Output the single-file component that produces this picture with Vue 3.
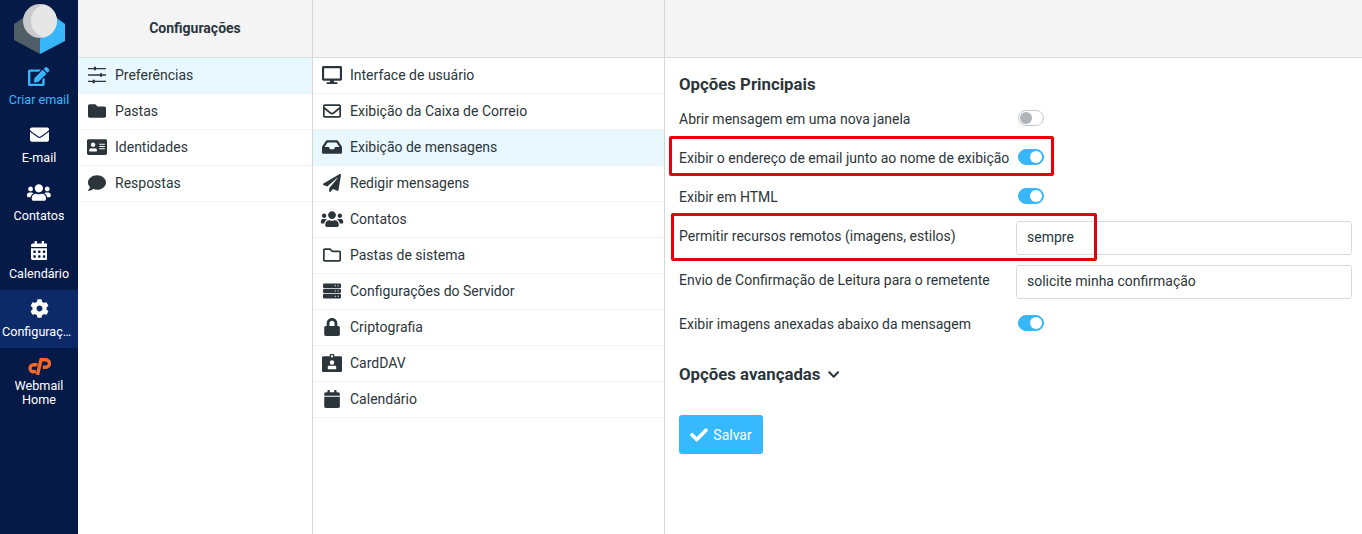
<template>
  <div class="app">
    <nav class="sidebar">
      <svg class="logo" viewBox="0 0 78 58" width="78" height="58">
        <defs>
          <clipPath id="ball"><circle cx="40" cy="21" r="17" /></clipPath>
        </defs>
        <polygon points="14,24 26,16 40,39 40,54 14,40" fill="#4f5e66" />
        <polygon points="40,39 54,16 65,24 65,41 40,54" fill="#37b6fa" />
        <circle cx="40" cy="21" r="17" fill="#c9cbcd" />
        <circle cx="48" cy="21" r="17" fill="#e6e6e6" clip-path="url(#ball)" />
      </svg>
      <a v-for="item in navItems" :key="item.label" class="nav-item" :class="{ compose: item.compose, active: item.active }">
        <svg class="nav-icon" :viewBox="item.box"><path :d="item.d" fill="currentColor" /></svg>
        <span class="nav-label">{{ item.label }}</span>
      </a>
      <a class="nav-item home">
        <svg class="cp-logo" viewBox="0 0 24 17" width="24" height="17">
          <path d="M10.5 6.8H6.5a3.3 3.3 0 0 0 0 6.9H9" fill="none" stroke="#f0692a" stroke-width="3.4" />
          <path d="M10.5 17 14 1.8h4.8a3.7 3.7 0 0 1 0 7.4h-3" fill="none" stroke="#f0692a" stroke-width="3.4" />
        </svg>
        <span class="nav-label">Webmail<br />Home</span>
      </a>
    </nav>

    <section class="col col-sections">
      <header class="col-head"><span>Configurações</span></header>
      <ul class="list">
        <li v-for="row in sections" :key="row.label" :class="{ selected: row.selected }">
          <svg class="row-icon" :viewBox="row.box" height="18"><path :d="row.d" fill="currentColor" fill-rule="evenodd" /></svg>
          {{ row.label }}
        </li>
      </ul>
    </section>

    <section class="col col-subsections">
      <header class="col-head"></header>
      <ul class="list">
        <li v-for="row in subsections" :key="row.label" :class="{ selected: row.selected }">
          <svg class="row-icon" :viewBox="row.box" height="18"><path :d="row.d" fill="currentColor" fill-rule="evenodd" /></svg>
          {{ row.label }}
        </li>
      </ul>
    </section>

    <section class="col col-content">
      <header class="col-head"></header>
      <div class="content">
        <h2 class="title-main">Opções Principais</h2>
        <div v-for="opt in options" :key="opt.label" class="opt" :class="opt.value ? 'opt-select' : 'opt-toggle'">
          <span class="opt-label">{{ opt.label }}</span>
          <div v-if="opt.value" class="select">{{ opt.value }}</div>
          <span v-else class="toggle" :class="{ on: opt.on }"></span>
        </div>
        <h2 class="title-adv">
          Opções avançadas
          <svg viewBox="0 0 448 512" height="13"><path :d="icons.chevron" fill="currentColor" /></svg>
        </h2>
        <button class="save" type="button">
          <svg viewBox="0 0 512 512" height="18"><path :d="icons.check" fill="currentColor" /></svg>
          Salvar
        </button>
        <div class="mark mark-one"></div>
        <div class="mark mark-two"></div>
      </div>
    </section>
  </div>
</template>

<script setup>
const icons = {
  edit: 'M402.6 83.2l90.2 90.2c3.8 3.8 3.8 10 0 13.8L274.4 405.6l-92.8 10.3c-12.4 1.4-22.9-9.1-21.5-21.5l10.3-92.8L388.8 83.2c3.8-3.8 10-3.8 13.8 0zm162-22.9l-48.8-48.8c-15.2-15.2-39.9-15.2-55.2 0l-35.4 35.4c-3.8 3.8-3.8 10 0 13.8l90.2 90.2c3.8 3.8 10 3.8 13.8 0l35.4-35.4c15.2-15.3 15.2-40 0-55.2zM384 346.2V448H64V128h229.8c3.2 0 6.2-1.3 8.5-3.5l40-40c7.6-7.6 2.2-20.5-8.5-20.5H48C21.5 64 0 85.5 0 112v352c0 26.5 21.5 48 48 48h352c26.5 0 48-21.5 48-48V306.2c0-10.7-12.9-16-20.5-8.5l-40 40c-2.2 2.3-3.5 5.3-3.5 8.5z',
  envelope: 'M502.3 190.8c3.9-3.1 9.7-.2 9.7 4.7V400c0 26.5-21.5 48-48 48H48c-26.5 0-48-21.5-48-48V195.6c0-5 5.7-7.8 9.7-4.7 22.4 17.4 52.1 39.5 154.1 113.6 21.1 15.4 56.7 47.8 92.2 47.6 35.7.3 72-32.8 92.3-47.6 102-74.1 131.6-96.3 154-113.7zM256 320c23.2.4 56.6-29.2 73.4-41.4 132.7-96.3 142.8-104.7 173.4-128.7 5.8-4.5 9.2-11.5 9.2-18.9v-19c0-26.5-21.5-48-48-48H48C21.5 64 0 85.5 0 112v19c0 7.4 3.4 14.3 9.2 18.9 30.6 23.9 40.7 32.4 173.4 128.7 16.8 12.2 50.2 41.8 73.4 41.4z',
  users: 'M96 224c35.3 0 64-28.7 64-64s-28.7-64-64-64-64 28.7-64 64 28.7 64 64 64zm448 0c35.3 0 64-28.7 64-64s-28.7-64-64-64-64 28.7-64 64 28.7 64 64 64zm32 32h-64c-17.6 0-33.5 7.1-45.1 18.6 40.3 22.1 68.9 62 75.1 109.4h66c17.7 0 32-14.3 32-32v-32c0-35.3-28.7-64-64-64zm-256 0c61.9 0 112-50.1 112-112S381.9 32 320 32 208 82.1 208 144s50.1 112 112 112zm76.8 32h-8.3c-20.8 10-43.9 16-68.5 16s-47.6-6-68.5-16h-8.3C179.6 288 128 339.6 128 403.2V432c0 26.5 21.5 48 48 48h288c26.5 0 48-21.5 48-48v-28.8c0-63.6-51.6-115.2-115.2-115.2zm-223.7-13.4C161.5 263.1 145.6 256 128 256H64c-35.3 0-64 28.7-64 64v32c0 17.7 14.3 32 32 32h65.9c6.3-47.4 34.9-87.3 75.2-109.4z',
  calendarAlt: 'M0 464c0 26.5 21.5 48 48 48h352c26.5 0 48-21.5 48-48V192H0v272zm320-196c0-6.6 5.4-12 12-12h40c6.6 0 12 5.4 12 12v40c0 6.6-5.4 12-12 12h-40c-6.6 0-12-5.4-12-12v-40zm0 128c0-6.6 5.4-12 12-12h40c6.6 0 12 5.4 12 12v40c0 6.6-5.4 12-12 12h-40c-6.6 0-12-5.4-12-12v-40zM192 268c0-6.6 5.4-12 12-12h40c6.6 0 12 5.4 12 12v40c0 6.6-5.4 12-12 12h-40c-6.6 0-12-5.4-12-12v-40zm0 128c0-6.6 5.4-12 12-12h40c6.6 0 12 5.4 12 12v40c0 6.6-5.4 12-12 12h-40c-6.6 0-12-5.4-12-12v-40zM64 268c0-6.6 5.4-12 12-12h40c6.6 0 12 5.4 12 12v40c0 6.6-5.4 12-12 12H76c-6.6 0-12-5.4-12-12v-40zm0 128c0-6.6 5.4-12 12-12h40c6.6 0 12 5.4 12 12v40c0 6.6-5.4 12-12 12H76c-6.6 0-12-5.4-12-12v-40zM400 64h-48V16c0-8.8-7.2-16-16-16h-32c-8.8 0-16 7.2-16 16v48H160V16c0-8.8-7.2-16-16-16h-32c-8.8 0-16 7.2-16 16v48H48C21.5 64 0 85.5 0 112v48h448v-48c0-26.5-21.5-48-48-48z',
  cog: 'M487.4 315.7l-42.6-24.6c4.3-23.2 4.3-47 0-70.2l42.6-24.6c4.9-2.8 7.1-8.6 5.5-14-11.1-35.6-30-67.8-54.7-94.6-3.8-4.1-10-5.1-14.8-2.3L380.8 110c-17.9-15.4-38.5-27.3-60.8-35.1V25.8c0-5.6-3.9-10.5-9.4-11.7-36.7-8.2-74.3-7.8-109.2 0-5.5 1.2-9.4 6.1-9.4 11.7V75c-22.2 7.9-42.8 19.8-60.8 35.1L88.7 85.5c-4.9-2.8-11-1.9-14.8 2.3-24.7 26.7-43.6 58.9-54.7 94.6-1.7 5.4.6 11.2 5.5 14L67.3 221c-4.3 23.2-4.3 47 0 70.2l-42.6 24.6c-4.9 2.8-7.1 8.6-5.5 14 11.1 35.6 30 67.8 54.7 94.6 3.8 4.1 10 5.1 14.8 2.3l42.6-24.6c17.9 15.4 38.5 27.3 60.8 35.1v49.2c0 5.6 3.9 10.5 9.4 11.7 36.7 8.2 74.3 7.8 109.2 0 5.5-1.2 9.4-6.1 9.4-11.7v-49.2c22.2-7.9 42.8-19.8 60.8-35.1l42.6 24.6c4.9 2.8 11 1.9 14.8-2.3 24.7-26.7 43.6-58.9 54.7-94.6 1.5-5.5-.7-11.3-5.6-14.1zM256 336c-44.1 0-80-35.9-80-80s35.9-80 80-80 80 35.9 80 80-35.9 80-80 80z',
  sliders: 'M0 54h168v36h-168zM168 20h60v104h-60zM228 54h284v36h-284zM0 238h340v36h-340zM340 204h60v104h-60zM400 238h112v36h-112zM0 422h132v36h-132zM132 388h60v104h-60zM192 422h320v36h-320z',
  folder: 'M464 128H272l-64-64H48C21.49 64 0 85.49 0 112v288c0 26.51 21.49 48 48 48h416c26.51 0 48-21.49 48-48V176c0-26.51-21.49-48-48-48z',
  idCard: 'M528 32H48C21.5 32 0 53.5 0 80v352c0 26.5 21.5 48 48 48h480c26.5 0 48-21.5 48-48V80c0-26.5-21.5-48-48-48zm-352 96c35.3 0 64 28.7 64 64s-28.7 64-64 64-64-28.7-64-64 28.7-64 64-64zm112 236.8c0 10.6-10 19.2-22.4 19.2H86.4C74 384 64 375.4 64 364.8v-19.2c0-31.8 30.1-57.6 67.2-57.6h5c12.3 5.1 25.7 8 39.8 8s27.6-2.9 39.8-8h5c37.1 0 67.2 25.8 67.2 57.6v19.2zM512 312c0 4.4-3.6 8-8 8H360c-4.4 0-8-3.6-8-8v-16c0-4.4 3.6-8 8-8h144c4.4 0 8 3.6 8 8v16zm0-64c0 4.4-3.6 8-8 8H360c-4.4 0-8-3.6-8-8v-16c0-4.4 3.6-8 8-8h144c4.4 0 8 3.6 8 8v16zm0-64c0 4.4-3.6 8-8 8H360c-4.4 0-8-3.6-8-8v-16c0-4.4 3.6-8 8-8h144c4.4 0 8 3.6 8 8v16z',
  comment: 'M256 32C114.6 32 0 125.1 0 240c0 49.6 21.4 95 57 130.7C44.5 421.1 2.7 466 2.2 466.5c-2.2 2.3-2.8 5.7-1.5 8.7S4.8 480 8 480c66.3 0 116-31.8 140.6-51.4 32.7 12.3 69 19.4 107.4 19.4 141.4 0 256-93.1 256-208S397.4 32 256 32z',
  desktop: 'M528 0H48C21.5 0 0 21.5 0 48v320c0 26.5 21.5 48 48 48h192l-16 48h-72c-13.3 0-24 10.7-24 24s10.7 24 24 24h272c13.3 0 24-10.7 24-24s-10.7-24-24-24h-72l-16-48h192c26.5 0 48-21.5 48-48V48c0-26.5-21.5-48-48-48zm-16 352H64V64h448v288z',
  envelopeOpen: 'M464 64H48C21.49 64 0 85.49 0 112v288c0 26.51 21.49 48 48 48h416c26.51 0 48-21.49 48-48V112c0-26.51-21.49-48-48-48zm0 48v40.805c-22.422 18.259-58.168 46.651-134.587 106.49-16.841 13.247-50.201 45.072-73.413 44.701-23.208.375-56.579-31.459-73.413-44.701C106.18 199.465 70.425 171.067 48 152.805V112h416zM48 400V214.398c22.914 18.251 55.409 43.862 104.938 82.646 21.857 17.205 60.134 55.186 103.062 54.955 42.717.231 80.509-37.199 103.053-54.947 49.528-38.783 82.032-64.401 104.947-82.653V400H48z',
  inbox: 'M567.938 243.908L462.25 85.374A48.003 48.003 0 0 0 422.311 64H153.689a48 48 0 0 0-39.938 21.374L8.062 243.908A47.994 47.994 0 0 0 0 270.533V400c0 26.51 21.49 48 48 48h480c26.51 0 48-21.49 48-48V270.533a47.994 47.994 0 0 0-8.062-26.625zM162.252 128h251.497l85.333 128H376l-32 64H232l-32-64H76.918l85.334-128z',
  plane: 'M476 3.2L12.5 270.6c-18.1 10.4-15.8 35.6 2.2 43.2L121 358.4l287.3-253.2c5.5-4.9 13.3 2.6 8.6 8.3L176 407v80.5c0 23.6 28.5 32.9 42.5 15.8L282 426l124.6 52.2c14.2 6 30.4-2.9 33-18.2l72-432C515 7.8 493.3-6.8 476 3.2z',
  folderOpen: 'M464 128H272l-54.63-54.63c-6-6-14.14-9.37-22.63-9.37H48C21.49 64 0 85.49 0 112v288c0 26.51 21.49 48 48 48h416c26.51 0 48-21.49 48-48V176c0-26.51-21.49-48-48-48zm0 272H48V112h140.12l54.63 54.63c6 6 14.14 9.37 22.63 9.37H464v224z',
  server: 'M32 40h448a32 32 0 0 1 32 32v72a32 32 0 0 1-32 32H32a32 32 0 0 1-32-32V72a32 32 0 0 1 32-32zM336 92v32h32V92zM416 92v32h32V92zM32 196h448a32 32 0 0 1 32 32v56a32 32 0 0 1-32 32H32a32 32 0 0 1-32-32v-56a32 32 0 0 1 32-32zM336 240v32h32v-32zM416 240v32h32v-32zM32 336h448a32 32 0 0 1 32 32v72a32 32 0 0 1-32 32H32a32 32 0 0 1-32-32v-72a32 32 0 0 1 32-32zM336 388v32h32v-32zM416 388v32h32v-32z',
  lock: 'M400 224h-24v-72C376 68.2 307.8 0 224 0S72 68.2 72 152v72H48c-26.5 0-48 21.5-48 48v192c0 26.5 21.5 48 48 48h352c26.5 0 48-21.5 48-48V272c0-26.5-21.5-48-48-48zm-104 0H152v-72c0-39.7 32.3-72 72-72s72 32.3 72 72v72z',
  badge: 'M48 64H224V24c0-13 11-24 24-24h80c13 0 24 11 24 24V64H528c26.5 0 48 21.5 48 48v352c0 26.5-21.5 48-48 48H48c-26.5 0-48-21.5-48-48V112c0-26.5 21.5-48 48-48zM260 36v56h56V36zM288 176a64 64 0 1 0 0 128 64 64 0 0 0 0-128zM200 336c-18 0-32 14-32 32v48c0 10 8 16 16 16h208c8 0 16-6 16-16v-48c0-18-14-32-32-32z',
  calendar: 'M12 192h424c6.6 0 12 5.4 12 12v260c0 26.5-21.5 48-48 48H48c-26.5 0-48-21.5-48-48V204c0-6.6 5.4-12 12-12zm436-44v-36c0-26.5-21.5-48-48-48h-48V12c0-6.6-5.4-12-12-12h-40c-6.6 0-12 5.4-12 12v52H160V12c0-6.6-5.4-12-12-12h-40c-6.6 0-12 5.4-12 12v52H48C21.5 64 0 85.5 0 112v36c0 6.6 5.4 12 12 12h424c6.6 0 12-5.4 12-12z',
  chevron: 'M207.029 381.476L12.686 187.132c-9.373-9.373-9.373-24.569 0-33.941l22.667-22.667c9.357-9.357 24.522-9.375 33.901-.04L224 284.505l154.745-154.021c9.379-9.335 24.544-9.317 33.901.04l22.667 22.667c9.373 9.373 9.373 24.569 0 33.941L240.971 381.476c-9.373 9.372-24.569 9.372-33.942 0z',
  check: 'M173.898 439.404l-166.4-166.4c-9.997-9.997-9.997-26.206 0-36.204l36.203-36.204c9.997-9.998 26.207-9.998 36.204 0L192 312.69 432.095 72.596c9.997-9.997 26.207-9.997 36.204 0l36.203 36.204c9.997 9.997 9.997 26.206 0 36.204l-294.4 294.401c-9.998 9.997-26.207 9.997-36.204-.001z'
}

const navItems = [
  { label: 'Criar email', d: icons.edit, box: '0 0 576 512', compose: true },
  { label: 'E-mail', d: icons.envelope, box: '0 0 512 512' },
  { label: 'Contatos', d: icons.users, box: '0 0 640 512' },
  { label: 'Calendário', d: icons.calendarAlt, box: '0 0 448 512' },
  { label: 'Configurações', d: icons.cog, box: '0 0 512 512', active: true }
]

const sections = [
  { label: 'Preferências', d: icons.sliders, box: '0 0 512 512', selected: true },
  { label: 'Pastas', d: icons.folder, box: '0 0 512 512' },
  { label: 'Identidades', d: icons.idCard, box: '0 0 576 512' },
  { label: 'Respostas', d: icons.comment, box: '0 0 512 512' }
]

const subsections = [
  { label: 'Interface de usuário', d: icons.desktop, box: '0 0 576 512' },
  { label: 'Exibição da Caixa de Correio', d: icons.envelopeOpen, box: '0 0 512 512' },
  { label: 'Exibição de mensagens', d: icons.inbox, box: '0 0 576 512', selected: true },
  { label: 'Redigir mensagens', d: icons.plane, box: '0 0 512 512' },
  { label: 'Contatos', d: icons.users, box: '0 0 640 512' },
  { label: 'Pastas de sistema', d: icons.folderOpen, box: '0 0 512 512' },
  { label: 'Configurações do Servidor', d: icons.server, box: '0 0 512 512' },
  { label: 'Criptografia', d: icons.lock, box: '0 0 448 512' },
  { label: 'CardDAV', d: icons.badge, box: '0 0 576 512' },
  { label: 'Calendário', d: icons.calendar, box: '0 0 448 512' }
]

const options = [
  { label: 'Abrir mensagem em uma nova janela', on: false },
  { label: 'Exibir o endereço de email junto ao nome de exibição', on: true },
  { label: 'Exibir em HTML', on: true },
  { label: 'Permitir recursos remotos (imagens, estilos)', value: 'sempre' },
  { label: 'Envio de Confirmação de Leitura para o remetente', value: 'solicite minha confirmação' },
  { label: 'Exibir imagens anexadas abaixo da mensagem', on: true }
]
</script>

<style scoped>
.app {
  display: flex;
  height: 534px;
  overflow: hidden;
  background: #fff;
  color: #2c363a;
  font-family: Roboto, "Liberation Sans", sans-serif;
  font-size: 14px;
}

.sidebar {
  width: 78px;
  flex: none;
  display: flex;
  flex-direction: column;
  background: #061a48;
  color: #fff;
}

.logo {
  display: block;
  flex: none;
}

.nav-item {
  height: 58px;
  flex: none;
  display: flex;
  flex-direction: column;
  align-items: center;
  padding-top: 9px;
  box-sizing: border-box;
}

.nav-item.compose {
  color: #37b6fa;
}

.nav-item.active {
  background: #0d2a68;
}

.nav-icon {
  display: block;
  height: 19px;
}

.cp-logo {
  display: block;
  margin-top: 1px;
}

.nav-label {
  margin-top: 7px;
  max-width: 74px;
  font-size: 12.6px;
  line-height: 14px;
  text-align: center;
  white-space: nowrap;
  overflow: hidden;
  text-overflow: ellipsis;
}

.home {
  height: 70px;
}

.home .nav-label {
  margin-top: 4px;
}

.col {
  display: flex;
  flex-direction: column;
  flex: none;
  box-sizing: border-box;
}

.col-sections {
  width: 235px;
  border-right: 1px solid #d4d6d8;
}

.col-subsections {
  width: 352px;
  border-right: 1px solid #d4d6d8;
}

.col-content {
  flex: 1;
}

.col-head {
  height: 58px;
  flex: none;
  box-sizing: border-box;
  display: flex;
  align-items: center;
  justify-content: center;
  background: #f4f4f4;
  border-bottom: 1px solid #d4dde2;
  font-weight: 700;
  padding-bottom: 2px;
}

.list {
  margin: 0;
  padding: 0;
  list-style: none;
}

.list li {
  height: 36px;
  box-sizing: border-box;
  display: flex;
  align-items: center;
  border-bottom: 1px solid #f0f2f3;
  padding: 0 0 2px 37px;
  position: relative;
}

.list li.selected {
  background: #e9f7fe;
}

.row-icon {
  position: absolute;
  left: 19px;
  top: 8px;
  transform: translateX(-50%);
  display: block;
}

.content {
  position: relative;
  padding: 0 10px 0 14px;
}

.title-main {
  margin: 0;
  padding-top: 16px;
  height: 25px;
  font-size: 16.8px;
  line-height: 20px;
  font-weight: 700;
}

.opt {
  display: flex;
  align-items: center;
}

.opt-label {
  width: 337px;
  flex: none;
}

.opt-toggle {
  height: 39px;
}

.opt-select {
  height: 44px;
}

.opt-select .opt-label {
  margin-top: -4px;
}

.toggle {
  width: 26px;
  height: 16px;
  margin: -2px 0 0 2px;
  box-sizing: border-box;
  border: 1px solid #c4c8ca;
  border-radius: 8px;
  background: #fff;
  position: relative;
}

.toggle::after {
  content: "";
  position: absolute;
  left: 1px;
  top: 1px;
  width: 12px;
  height: 12px;
  border-radius: 50%;
  background: #b0b4b8;
}

.toggle.on {
  background: #37b6fa;
  border-color: #37b6fa;
}

.toggle.on::after {
  left: 11px;
  background: #fff;
}

.select {
  flex: 1;
  height: 34px;
  box-sizing: border-box;
  border: 1px solid #d8dcde;
  border-radius: 3px;
  padding: 0 10px;
  line-height: 30px;
}

.title-adv {
  margin: 0;
  padding-top: 21px;
  height: 20px;
  font-size: 16.8px;
  line-height: 20px;
  font-weight: 700;
  display: flex;
  align-items: center;
  gap: 8px;
}

.save {
  margin-top: 31px;
  width: 84px;
  height: 39px;
  border: none;
  border-radius: 3px;
  background: #37b9ff;
  color: #fff;
  font: inherit;
  display: flex;
  align-items: center;
  justify-content: center;
  gap: 5px;
  padding: 0;
}

.mark {
  position: absolute;
  box-sizing: border-box;
  border: 3px solid #e6000a;
  border-radius: 2px;
  pointer-events: none;
}

.mark-one {
  left: 4px;
  top: 78px;
  width: 385px;
  height: 40px;
}

.mark-two {
  left: 6px;
  top: 155px;
  width: 426px;
  height: 48px;
}
</style>
